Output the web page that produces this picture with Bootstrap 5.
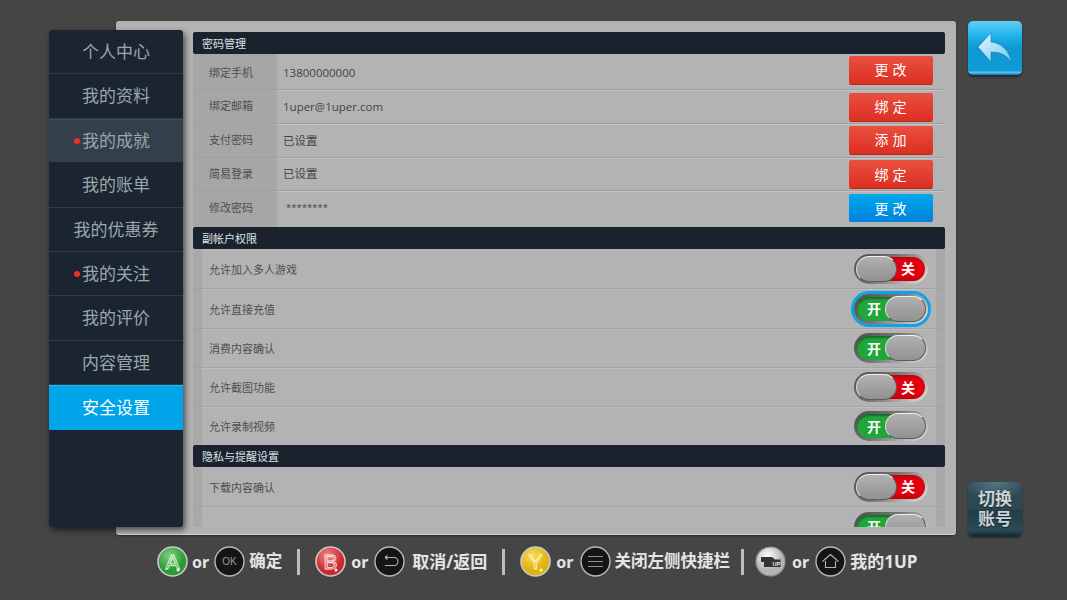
<!DOCTYPE html>
<html lang="zh-CN">
<head>
<meta charset="utf-8">
<title>安全设置</title>
<link href="https://cdn.jsdelivr.net/npm/bootstrap@5.3.0/dist/css/bootstrap.min.css" rel="stylesheet">
<style>
html,body{height:100%}
body{background:#454545;overflow:hidden;font-family:"Open Sans","Noto Sans CJK SC",sans-serif;color:#4b4b4b}
.stage{padding:21px 0 0 49px;height:536px}
.sidemenu{width:134px;height:497px;margin-top:9px;margin-right:-67px;background:#1b2531;border-radius:3px;box-shadow:2px 3px 6px rgba(0,0,0,.6);z-index:2;flex:none;position:relative;overflow:hidden}
.sideitem{height:44.4px;display:flex;align-items:center;justify-content:center;font-size:17px;color:#9aa7aa;border-bottom:1px solid #2d3a47}
.sideitem.cur{background:#333f4b;border-bottom-color:#1b2531;border-top:1px solid #3f4b57}
.sideitem.on{background:#00a4e8;color:#fff;border-top:1px solid #2bb8ef;border-bottom:0}
.sidelabel{position:relative}
.reddot{position:absolute;left:-8px;top:50%;margin-top:-3px;width:6px;height:6px;border-radius:50%;background:#ee3124}
.sheet{width:840px;height:514px;background:#b3b3b3;border-radius:3px;padding:11px 11px 8px 77px;flex:none;border-bottom:1px solid #d6d6d6;box-shadow:0 1px 2px rgba(0,0,0,.4)}
.scrollbox{height:495px;overflow:hidden;background:#b3b3b3;position:relative}
.headbar{height:22px;background:#1a222d;color:#dfe3e6;font-size:11px;line-height:23px;padding-left:9px;border-radius:2px}
.rowa{display:flex;align-items:center;border-bottom:1px solid #a0a0a0;box-shadow:0 1px 0 #c4c4c4;font-size:11.5px}
.rowa:nth-child(2){height:36px}
.rowa:nth-child(3){height:34px}
.rowa:nth-child(4){height:34px}
.rowa:nth-child(5){height:33px}
.rowa:nth-child(6){height:36px;border-bottom:0;box-shadow:none}
.rowa:nth-child(2) .redbtn{margin-bottom:4px}
.rowa:nth-child(4) .redbtn{margin-bottom:2px}
.rowa:nth-child(6) .bluebtn{margin-bottom:2px}
.rowa:nth-child(2) .labelcol,.rowa:nth-child(2) .valuecol{padding-top:3px}
.rowa:nth-child(6) .labelcol,.rowa:nth-child(6) .valuecol{padding-bottom:2px}
.labelcol{width:84px;align-self:stretch;background:#a6a6a6;padding-left:16px;display:flex;align-items:center;font-size:11px;color:#4f4f4f;flex:none}
.valuecol{padding-left:6px;flex:1;color:#444}
.valuecol.stars{padding-left:9px;font-size:9.5px}
.redbtn,.bluebtn{width:84px;height:28px;margin-right:12px;padding:0;border:0;border-radius:2px;color:#fff;font-size:14px;letter-spacing:4px;text-indent:3px;line-height:27px}
.redbtn{background:linear-gradient(#e9503f,#dc2f22);box-shadow:0 1px 0 #b5281e}
.bluebtn{background:linear-gradient(#00a8ec,#0082de)}
.rowb{display:flex;align-items:center;justify-content:space-between;border-bottom:1px solid #a3a3a3;box-shadow:0 1px 0 #bfbfbf;font-size:11px;color:#4f4f4f;padding-left:16px;padding-right:17px;position:relative}
.h40{height:40px}.h39{height:39px}.h38{height:38px;border-bottom:0;box-shadow:none}
.stripl,.stripr{position:absolute;top:0;bottom:0;width:9px;background:#a9a9a9}
.stripl{left:0}.stripr{right:0}
.rowtext{position:relative;padding-top:3px}
.tgl{width:74px;height:30px;border-radius:15px;background:linear-gradient(135deg,#4c4c4c 0%,#777 45%,#e2e2e2 100%);padding:3px;position:relative;flex:none}
.tgl.ring{box-shadow:0 0 0 3px #0ba4ea}
.tgltrack{height:24px;border-radius:12px;display:flex;align-items:center;color:#fff;font-weight:700;font-size:14px;position:relative;overflow:hidden}
.tgl.off .tgltrack{background:#e3000f;justify-content:flex-end;padding-right:10px;box-shadow:inset 8px 0 6px rgba(0,0,0,.35)}
.tgl.yes .tgltrack{background:#21a63a;padding-left:10px;box-shadow:inset 0 2px 2px rgba(0,0,0,.35)}
.thumb{position:absolute;top:2px;width:41px;height:26px;border-radius:13px;background:linear-gradient(#b0b0b0,#929292);border:1px solid #5d5d5d;border-top-color:#f2f2f2;border-left-color:#dcdcdc}
.tgl.off .thumb{left:2px}
.tgl.yes .thumb{right:2px}
.sidecol{width:54px;margin-left:12px;height:515px;flex:none}
.squarebtn{width:54px;height:54px;border-radius:5px;border:0;padding:0;display:flex;align-items:center;justify-content:center}
.backbtn{background:linear-gradient(#5fd0f6 0,#1fb2ea 28%,#0f98d2 50%,#0f9bd6 92%,#5cc6ec 95%,#0f76a8 100%);box-shadow:0 2px 2px #1d2a33}
.swapbtn{background:radial-gradient(ellipse 60% 35% at 50% 0,#557784 0,rgba(85,119,132,0) 100%),linear-gradient(#2e4b57 0,#2b4853 50%,#213e49 52%,#2a4a56 90%,#142730 100%);box-shadow:0 2px 2px #1e2a30;color:#cfd2d3;font-weight:700;font-size:17px;line-height:20px;text-align:center;text-shadow:0 1px 1px #10202a}
.hints{padding:10px 0 0 157px;color:#e4e4e4;font-weight:700;font-size:16.5px;gap:5px;height:41px}
.hints svg{width:31px;height:31px;flex:none}
.iconnarrow{margin-right:-1px}
.ortext{font-size:16px;font-family:"Noto Sans","Open Sans",sans-serif}
.orwide{margin:0 1px}
.txtwide{font-size:17px;margin-left:2px}
.txtlast{font-size:17px}
.vsep{width:3px;height:26px;background:#bdbdbd;margin:0 10px;flex:none}
.vsep.tight{margin:0 6px}
</style>
</head>
<body>
<div class="stage d-flex align-items-start">
  <nav class="sidemenu d-flex flex-column">
    <div class="sideitem">个人中心</div>
    <div class="sideitem">我的资料</div>
    <div class="sideitem cur"><span class="sidelabel"><i class="reddot"></i>我的成就</span></div>
    <div class="sideitem">我的账单</div>
    <div class="sideitem">我的优惠券</div>
    <div class="sideitem"><span class="sidelabel"><i class="reddot"></i>我的关注</span></div>
    <div class="sideitem">我的评价</div>
    <div class="sideitem">内容管理</div>
    <div class="sideitem on">安全设置</div>
  </nav>
  <main class="sheet">
    <div class="scrollbox">
      <section>
        <div class="headbar">密码管理</div>
        <div class="rowa"><div class="labelcol">绑定手机</div><div class="valuecol">13800000000</div><button class="redbtn">更改</button></div>
        <div class="rowa"><div class="labelcol">绑定邮箱</div><div class="valuecol">1uper@1uper.com</div><button class="redbtn">绑定</button></div>
        <div class="rowa"><div class="labelcol">支付密码</div><div class="valuecol">已设置</div><button class="redbtn">添加</button></div>
        <div class="rowa"><div class="labelcol">简易登录</div><div class="valuecol">已设置</div><button class="redbtn">绑定</button></div>
        <div class="rowa"><div class="labelcol">修改密码</div><div class="valuecol stars">********</div><button class="bluebtn">更改</button></div>
      </section>
      <section>
        <div class="headbar">副帐户权限</div>
        <div class="rowb h40"><i class="stripl"></i><i class="stripr"></i><span class="rowtext">允许加入多人游戏</span><div class="tgl off"><div class="tgltrack">关</div><div class="thumb"></div></div></div>
        <div class="rowb h40"><i class="stripl"></i><i class="stripr"></i><span class="rowtext">允许直接充值</span><div class="tgl yes ring"><div class="tgltrack">开</div><div class="thumb"></div></div></div>
        <div class="rowb h39"><i class="stripl"></i><i class="stripr"></i><span class="rowtext">消费内容确认</span><div class="tgl yes"><div class="tgltrack">开</div><div class="thumb"></div></div></div>
        <div class="rowb h39"><i class="stripl"></i><i class="stripr"></i><span class="rowtext">允许截图功能</span><div class="tgl off"><div class="tgltrack">关</div><div class="thumb"></div></div></div>
        <div class="rowb h38"><i class="stripl"></i><i class="stripr"></i><span class="rowtext">允许录制视频</span><div class="tgl yes"><div class="tgltrack">开</div><div class="thumb"></div></div></div>
      </section>
      <section>
        <div class="headbar">隐私与提醒设置</div>
        <div class="rowb h40"><i class="stripl"></i><i class="stripr"></i><span class="rowtext">下载内容确认</span><div class="tgl off"><div class="tgltrack">关</div><div class="thumb"></div></div></div>
        <div class="rowb h40"><i class="stripl"></i><i class="stripr"></i><span class="rowtext"></span><div class="tgl yes"><div class="tgltrack">开</div><div class="thumb"></div></div></div>
      </section>
    </div>
  </main>
  <aside class="sidecol d-flex flex-column justify-content-between">
    <button class="squarebtn backbtn" aria-label="返回">
      <svg width="40" height="36" viewBox="0 0 40 36"><defs><linearGradient id="ag" x1="0" y1="0" x2="1" y2="1"><stop offset="0" stop-color="#e6f7fe"/><stop offset="1" stop-color="#6fc8ee"/></linearGradient></defs><path d="M3 17 16 3v9c11 1 18 9 21 21-5-8-12-11-21-11v10z" fill="url(#ag)" stroke="#0d7fb4" stroke-width=".6"/></svg>
    </button>
    <button class="squarebtn swapbtn">切换<br>账号</button>
  </aside>
</div>
<footer class="hints d-flex align-items-center">
  <svg class="iconnarrow" viewBox="0 0 31 31"><defs><radialGradient id="gg" cx=".4" cy=".3"><stop offset="0" stop-color="#7fd07f"/><stop offset="1" stop-color="#2c9a35"/></radialGradient></defs><circle cx="15.5" cy="15.5" r="14.5" fill="url(#gg)" stroke="#c9c9c9" stroke-width="1.6"/><text x="15.5" y="22.5" text-anchor="middle" font-size="21" fill="none" stroke="#eafbe8" stroke-width=".8" font-weight="400" font-family="Liberation Sans">A</text><circle cx="21" cy="24" r="1.5" fill="#eafbe8"/></svg>
  <span class="ortext">or</span>
  <svg class="iconnarrow" viewBox="0 0 31 31"><circle cx="15.5" cy="15.5" r="14.5" fill="#151515" stroke="#b8b8b8" stroke-width="1.4"/><text x="15.5" y="19" text-anchor="middle" font-size="10" fill="#9a9a9a" font-weight="400" font-family="Liberation Sans">OK</text></svg>
  <span>确定</span>
  <i class="vsep"></i>
  <svg class="iconnarrow" viewBox="0 0 31 31"><defs><radialGradient id="rg" cx=".4" cy=".3"><stop offset="0" stop-color="#f08a8a"/><stop offset="1" stop-color="#c92a2f"/></radialGradient></defs><circle cx="15.5" cy="15.5" r="14.5" fill="url(#rg)" stroke="#c9c9c9" stroke-width="1.6"/><text x="15.5" y="22.5" text-anchor="middle" font-size="21" fill="none" stroke="#fde8e8" stroke-width=".8" font-weight="400" font-family="Liberation Sans">B</text><circle cx="21" cy="24" r="1.5" fill="#fde8e8"/></svg>
  <span class="ortext orwide">or</span>
  <svg viewBox="0 0 31 31"><circle cx="15.5" cy="15.5" r="14.5" fill="#151515" stroke="#b8b8b8" stroke-width="1.4"/><path d="M11 11.5h9a4 4 0 0 1 0 8h-9M11 11.5l2.5-2M11 11.5l2.5 2" fill="none" stroke="#b5b5b5" stroke-width="1.1"/></svg>
  <span class="txtwide">取消/返回</span>
  <i class="vsep"></i>
  <svg class="iconnarrow" viewBox="0 0 31 31"><defs><radialGradient id="yg" cx=".4" cy=".3"><stop offset="0" stop-color="#f7dc5a"/><stop offset="1" stop-color="#e2b213"/></radialGradient></defs><circle cx="15.5" cy="15.5" r="14.5" fill="url(#yg)" stroke="#c9c9c9" stroke-width="1.6"/><text x="15.5" y="22.5" text-anchor="middle" font-size="21" fill="none" stroke="#fff8cf" stroke-width=".8" font-weight="400" font-family="Liberation Sans">Y</text><circle cx="21" cy="24" r="1.5" fill="#fff8cf"/></svg>
  <span class="ortext orwide">or</span>
  <svg class="iconnarrow" viewBox="0 0 31 31"><circle cx="15.5" cy="15.5" r="14.5" fill="#151515" stroke="#b8b8b8" stroke-width="1.4"/><path d="M8 10.5h15M8 15.5h15M8 20.5h15" stroke="#8f8f8f" stroke-width="1.2"/></svg>
  <span>关闭左侧快捷栏</span>
  <i class="vsep tight"></i>
  <svg viewBox="0 0 31 31"><defs><radialGradient id="wg" cx=".4" cy=".3"><stop offset="0" stop-color="#fff"/><stop offset="1" stop-color="#b5b5b5"/></radialGradient></defs><circle cx="15.5" cy="15.5" r="14.5" fill="url(#wg)" stroke="#8f8f8f" stroke-width="1.2"/><path d="M6 11h11l3 2.5h5.5v7.5H9v-5H6z" fill="#333"/><text x="17.5" y="20" font-size="5.5" fill="#eee" font-weight="700" font-family="Liberation Sans">UP</text></svg>
  <span class="ortext orwide">or</span>
  <svg class="iconnarrow" viewBox="0 0 31 31"><circle cx="15.5" cy="15.5" r="14.5" fill="#151515" stroke="#b8b8b8" stroke-width="1.4"/><path d="M7.5 15.5 15.5 8.5l8 7M10.5 15v6.5h10V15" fill="none" stroke="#b5b5b5" stroke-width="1.1"/></svg>
  <span class="txtlast">我的1UP</span>
</footer>
<script src="https://cdn.jsdelivr.net/npm/bootstrap@5.3.0/dist/js/bootstrap.bundle.min.js"></script>
</body>
</html>
